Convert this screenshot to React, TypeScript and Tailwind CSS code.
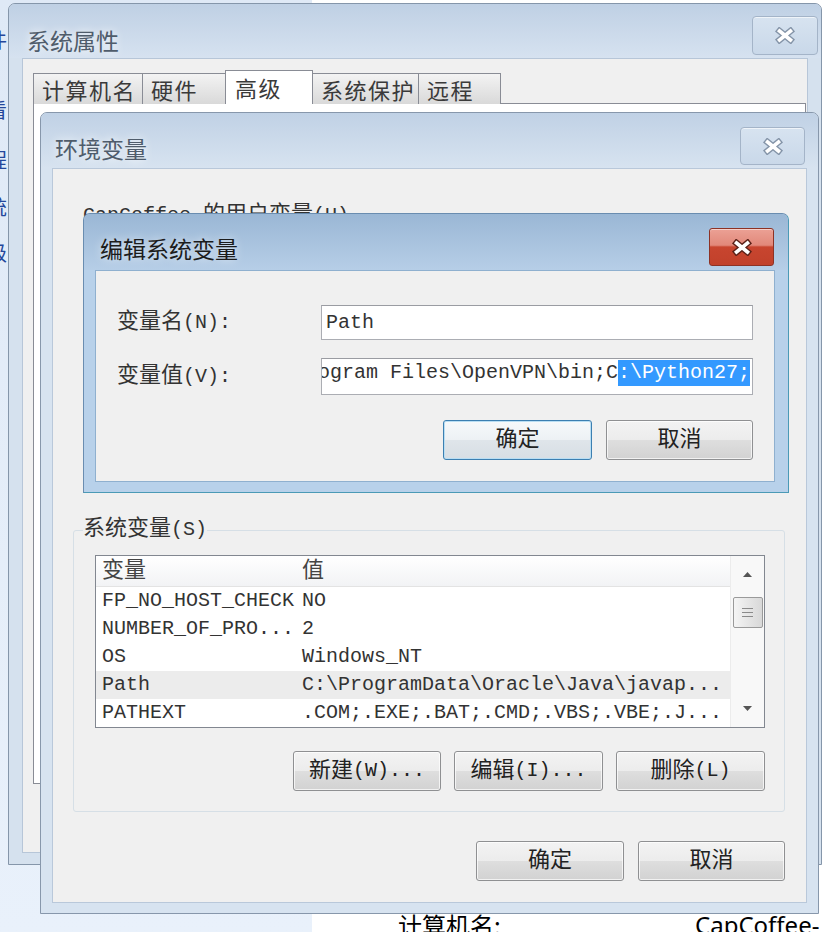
import React from "react";

const MONO = "font-['Liberation_Mono','Noto_Sans_CJK_SC',monospace]";
const SANS = "font-['Noto_Sans_CJK_SC','Noto_Sans',sans-serif]";

// Chinese runs are a bit larger than the latin half-width ones (SimSun look)
function Mx({ t }: { t: string }) {
  const parts = t.split(/([\u3000-\u9fff\uff00-\uffef]+)/);
  return (
    <>
      {parts.map((p, i) =>
        i % 2 ? (
          <span key={i} className="text-[22px]">
            {p}
          </span>
        ) : (
          <span key={i}>{p}</span>
        )
      )}
    </>
  );
}

function XGlyph({ active }: { active?: boolean }) {
  return (
    <svg width="22" height="17" viewBox="0 0 22 17">
      <path
        d="M5.5 4L16.5 13M16.5 4L5.5 13"
        stroke={active ? "#5b2118" : "#8494a8"}
        strokeWidth="6.4"
        strokeLinecap="square"
      />
      <path d="M5.5 4L16.5 13M16.5 4L5.5 13" stroke="#fff" strokeWidth="3.6" strokeLinecap="square" />
    </svg>
  );
}

function CloseBtn({ active, size }: { active?: boolean; size: string }) {
  return (
    <div
      className={
        active
          ? `flex items-center justify-center rounded-[3px] border border-[#8d3225] bg-[linear-gradient(#eba195_0%,#e2887a_45%,#c8452f_50%,#c1412b_100%)] shadow-[inset_0_1px_0_rgba(255,255,255,0.5)] ${size}`
          : `flex items-center justify-center rounded-[4px] border border-[#a4b4c8] bg-[linear-gradient(#d7e3f0,#c9d8e9)] shadow-[inset_0_1px_0_rgba(255,255,255,0.6)] ${size}`
      }
    >
      <XGlyph active={active} />
    </div>
  );
}

function Btn({ label, w, focus }: { label: string; w: string; focus?: boolean }) {
  return (
    <div
      className={`flex h-[40px] items-center justify-center rounded-[3px] border text-[20px] text-[#222] ${MONO} ${w} ${
        focus
          ? "border-[#3c7fb1] bg-[linear-gradient(#f6f9fb_0%,#edf1f4_50%,#dfe5ea_51%,#d7dee4_100%)] shadow-[inset_0_0_0_1px_#b9def3]"
          : "border-[#8f9092] bg-[linear-gradient(#f3f3f3_0%,#ececec_50%,#dedede_51%,#d2d2d2_100%)] shadow-[inset_0_0_0_1px_rgba(255,255,255,0.7)]"
      }`}
    >
      <Mx t={label} />
    </div>
  );
}

const rows: [string, string][] = [
  ["FP_NO_HOST_CHECK", "NO"],
  ["NUMBER_OF_PRO...", "2"],
  ["OS", "Windows_NT"],
  ["Path", String.raw`C:\ProgramData\Oracle\Java\javap...`],
  ["PATHEXT", ".COM;.EXE;.BAT;.CMD;.VBS;.VBE;.J..."],
];

const tabs = [
  { name: "计算机名", w: "w-[110px]" },
  { name: "硬件", w: "w-[84px]" },
  { name: "高级", w: "w-[88px]", on: true },
  { name: "系统保护", w: "w-[107px]" },
  { name: "远程", w: "w-[83px]" },
];

export default function App() {
  return (
    <div className={`relative flex h-[932px] w-[824px] overflow-hidden ${SANS}`}>
      {/* control panel behind the dialogs */}
      <div className="w-[312px] shrink-0 bg-[linear-gradient(#dfe9f6,#e9f1fb)]">
        <div className="-ml-[13px] flex w-[22px] flex-col pt-[29px] text-[20px] leading-[22px] text-[#24479b]">
          <span>件</span>
          <span className="mt-[48px]">看</span>
          <span className="mt-[28px]">程</span>
          <span className="mt-[25px]">统</span>
          <span className="mt-[24px]">级</span>
        </div>
      </div>
      <div className="flex-1 bg-white">
        <div className="mt-[909px] flex pl-[86px] text-[24px] leading-[32px] text-black">
          <span className="w-[297px] shrink-0">计算机名:</span>
          <span className="font-['Noto_Sans',sans-serif]">CapCoffee-PC</span>
        </div>
      </div>

      {/* 系统属性 */}
      <div className="absolute left-[8px] top-[3px] flex h-[862px] w-[814px] flex-col rounded-t-[7px] border border-[#8596aa] bg-[#d5e1ee]">
        <div className="flex h-[54px] shrink-0 items-start justify-between rounded-t-[6px] bg-[linear-gradient(#bfd0e4,#d6e2f0)] pl-[18px] pr-[3px]">
          <span className="mt-[22px] text-[23px] leading-[28px] text-[#4f5c6b] [text-shadow:0_0_10px_#fff]">系统属性</span>
          <div className="mt-[12px]">
            <CloseBtn size="h-[39px] w-[66px]" />
          </div>
        </div>
        <div className="mx-[13px] mb-[11px] flex flex-1 flex-col border border-[#b7c6d8] bg-[#f0f0f0] pl-[10px] pr-[1px] pt-[11px]">
          <div className="relative z-10 -mb-px flex items-end text-[22px] tracking-[1.5px] text-[#3a3a3a]">
            {tabs.map((t, i) => (
              <div
                key={t.name}
                className={`flex items-center border border-b-0 border-[#898c95] pl-[8px] ${t.w} ${i ? "-ml-px" : ""} ${
                  t.on ? "h-[34px] bg-white pl-[9px]" : "h-[31px] bg-[linear-gradient(#f3f3f3,#e6e6e6_50%,#d9d9d9)]"
                }`}
              >
                {t.name}
              </div>
            ))}
          </div>
          <div className="h-[681px] border border-[#898c95] bg-white" />
        </div>
      </div>

      {/* 环境变量 */}
      <div className="absolute left-[40px] top-[112px] flex h-[802px] w-[779px] flex-col rounded-t-[7px] border border-[#8797ab] bg-[#d7e3f0]">
        <div className="flex h-[55px] shrink-0 items-start justify-between rounded-t-[6px] bg-[linear-gradient(#c0d1e5,#d7e3f0)] pl-[14px] pr-[13px]">
          <span className="mt-[21px] text-[23px] leading-[28px] text-[#4f5c6b] [text-shadow:0_0_10px_#fff]">环境变量</span>
          <div className="mt-[14px]">
            <CloseBtn size="h-[38px] w-[65px]" />
          </div>
        </div>
        <div className={`mx-[11px] mb-[10px] flex flex-1 flex-col border border-[#b9c8da] bg-[#f0f0f0] pl-[20px] pr-[21px] text-[#333] ${MONO}`}>
          <div className="h-[351px] shrink-0 pl-[10px] pt-[36px] text-[20px] leading-[22px]">
            <Mx t="CapCoffee 的用户变量(U)" />
          </div>
          <fieldset className="rounded-[3px] border border-[#d6dfe6] px-[9px]">
            <legend className="text-[20px] leading-[20px]">
              <Mx t="系统变量(S)" />
            </legend>
            <div className="pb-[20px] pl-[12px] pr-[10px] pt-[15px]">
              <div className="flex h-[173px] border border-[#828790] bg-white">
                <div className="flex flex-1 flex-col overflow-hidden">
                  <div className="flex h-[31px] shrink-0 items-center border-b border-[#e3e3e3] bg-[linear-gradient(#ffffff,#f2f3f5)] text-[22px] text-[#444]">
                    <div className="w-[206px] pl-[6px]">变量</div>
                    <div>值</div>
                  </div>
                  {rows.map(([k, v]) => (
                    <div
                      key={k}
                      className={`flex h-[28px] shrink-0 items-center whitespace-nowrap text-[20px] ${k === "Path" ? "bg-[#ececec]" : ""}`}
                    >
                      <div className="w-[206px] shrink-0 pl-[6px]">{k}</div>
                      <div>{v}</div>
                    </div>
                  ))}
                </div>
                <div className="flex w-[34px] shrink-0 flex-col items-center border-l border-[#ececec] bg-[#f8f8f8]">
                  <div className="flex h-[37px] items-center">
                    <svg width="9" height="5" viewBox="0 0 9 5">
                      <path d="M0 5L4.5 0L9 5Z" fill="#555" />
                    </svg>
                  </div>
                  <div className="mt-[4px] flex h-[31px] w-[30px] flex-col items-center justify-center gap-[3px] rounded-[2px] border border-[#9a9a9a] bg-[linear-gradient(90deg,#f5f5f5,#e6e6e6_50%,#d8d8d8)]">
                    <div className="h-px w-[11px] bg-[#8a8a8a]" />
                    <div className="h-px w-[11px] bg-[#8a8a8a]" />
                    <div className="h-px w-[11px] bg-[#8a8a8a]" />
                  </div>
                  <div className="mt-auto flex h-[37px] items-center">
                    <svg width="9" height="5" viewBox="0 0 9 5">
                      <path d="M0 0L4.5 5L9 0Z" fill="#555" />
                    </svg>
                  </div>
                </div>
              </div>
              <div className="mt-[23px] flex justify-end gap-[13px]">
                <Btn label="新建(W)..." w="w-[148px]" />
                <Btn label="编辑(I)..." w="w-[149px]" />
                <Btn label="删除(L)" w="w-[149px]" />
              </div>
            </div>
          </fieldset>
          <div className="mt-[29px] flex justify-end gap-[14px]">
            <Btn label="确定" w="w-[148px]" />
            <Btn label="取消" w="w-[147px]" />
          </div>
        </div>
      </div>

      {/* 编辑系统变量 */}
      <div className="absolute left-[83px] top-[213px] flex h-[280px] w-[706px] flex-col rounded-t-[7px] border border-[#6a8db0] border-b-[#4b9ab6] border-r-[#4b9ab6] bg-[#b8d1ea]">
        <div className="flex h-[56px] shrink-0 items-start justify-between rounded-t-[6px] bg-[linear-gradient(#9ab7d5,#b6cee7)] pl-[16px] pr-[14px]">
          <span className="mt-[20px] text-[23px] leading-[28px] text-[#1c1c1c] [text-shadow:0_0_10px_rgba(255,255,255,0.7)]">
            编辑系统变量
          </span>
          <div className="mt-[14px]">
            <CloseBtn active size="h-[38px] w-[65px]" />
          </div>
        </div>
        <div className={`mb-[10px] ml-[11px] mr-[13px] flex flex-1 flex-col border border-[#8fb0cf] bg-[#f0f0f0] px-[21px] pt-[34px] text-[20px] text-[#333] ${MONO}`}>
          <div className="flex items-center">
            <div className="w-[204px] shrink-0">
              <Mx t="变量名(N):" />
            </div>
            <div className="flex h-[35px] flex-1 items-center border border-[#abadb3] border-t-[#9a9ca2] bg-white pl-[4px] leading-[26px]">
              Path
            </div>
          </div>
          <div className="mt-[18px] flex items-center">
            <div className="w-[204px] shrink-0">
              <Mx t="变量值(V):" />
            </div>
            <div className="flex h-[37px] flex-1 items-start justify-end overflow-hidden whitespace-nowrap border border-[#abadb3] border-t-[#9a9ca2] bg-white pr-[2px] pt-[1px] leading-[26px]">
              <span className="shrink-0">C:\Program Files\OpenVPN\bin;C</span>
              <span className="shrink-0 bg-[#3399ff] text-white">:\Python27;</span>
            </div>
          </div>
          <div className="mt-[25px] flex justify-end gap-[14px]">
            <Btn label="确定" w="w-[149px]" focus />
            <Btn label="取消" w="w-[147px]" />
          </div>
        </div>
      </div>
    </div>
  );
}
